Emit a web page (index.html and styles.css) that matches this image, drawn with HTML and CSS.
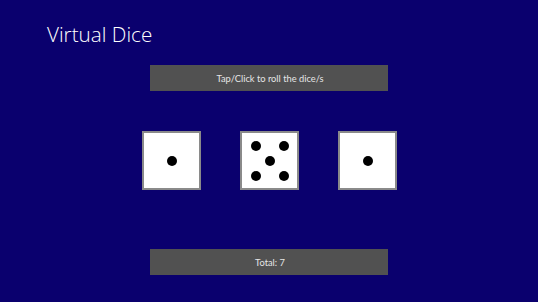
FILE: index.html
```html
<!DOCTYPE html>
<html>
<head>
<meta charset="utf-8">
<link rel="stylesheet" href="styles.css">
</head>
<body>
<div class="page">
  <h1 class="title">Virtual Dice</h1>
  <div class="bar roll">Tap/Click to roll the dice/s</div>
  <div class="dice">
    <div class="die">
      <span class="dot c"></span>
    </div>
    <div class="die">
      <span class="dot tl"></span>
      <span class="dot tr"></span>
      <span class="dot c"></span>
      <span class="dot bl"></span>
      <span class="dot br"></span>
    </div>
    <div class="die">
      <span class="dot c"></span>
    </div>
  </div>
  <div class="bar total">Total: 7</div>
</div>
</body>
</html>
```
FILE: styles.css
```css
html, body {
  margin: 0;
  padding: 0;
  background: #0a006e;
  width: 538px;
  height: 302px;
  overflow: hidden;
}
.page {
  display: flex;
  flex-direction: column;
  align-items: center;
  font-family: "Open Sans", "Noto Sans", sans-serif;
}
.title {
  align-self: flex-start;
  margin: 21px 0 0 47px;
  font-weight: 300;
  font-size: 20.7px;
  line-height: 26px;
  color: #ffffff;
}
.bar {
  width: 238px;
  height: 26px;
  background: #515151;
  color: #e6e6e6;
  font-family: "Lato", "Noto Sans", sans-serif;
  font-size: 9.3px;
  display: flex;
  align-items: center;
  justify-content: center;
  padding-left: 2px;
  box-sizing: border-box;
}
.roll {
  margin-top: 18px;
}
.dice {
  display: flex;
  gap: 39px;
  margin-top: 40px;
  margin-left: 1px;
}
.die {
  position: relative;
  width: 55px;
  height: 55px;
  background: #ffffff;
  border: 2px solid #8a8a8a;
}
.dot {
  position: absolute;
  width: 10px;
  height: 10px;
  border-radius: 50%;
  background: #000;
  margin: -5px 0 0 -5px;
}
.c { left: 50%; top: 50%; }
.tl { left: 13.5px; top: 13px; }
.tr { left: 41.5px; top: 13px; }
.bl { left: 13.5px; top: 43px; }
.br { left: 41.5px; top: 43px; }
.total {
  margin-top: 59px;
}
```
